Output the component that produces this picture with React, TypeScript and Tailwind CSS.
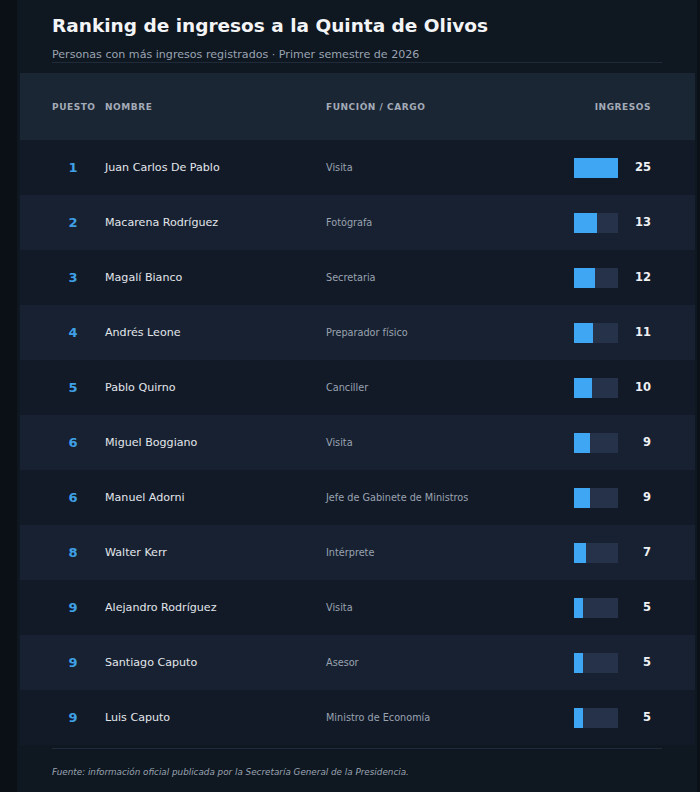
const rows = [
  { rank: 1, name: 'Juan Carlos De Pablo', role: 'Visita', count: 25 },
  { rank: 2, name: 'Macarena Rodríguez', role: 'Fotógrafa', count: 13 },
  { rank: 3, name: 'Magalí Bianco', role: 'Secretaria', count: 12 },
  { rank: 4, name: 'Andrés Leone', role: 'Preparador físico', count: 11 },
  { rank: 5, name: 'Pablo Quirno', role: 'Canciller', count: 10 },
  { rank: 6, name: 'Miguel Boggiano', role: 'Visita', count: 9 },
  { rank: 6, name: 'Manuel Adorni', role: 'Jefe de Gabinete de Ministros', count: 9 },
  { rank: 8, name: 'Walter Kerr', role: 'Intérprete', count: 7 },
  { rank: 9, name: 'Alejandro Rodríguez', role: 'Visita', count: 5 },
  { rank: 9, name: 'Santiago Caputo', role: 'Asesor', count: 5 },
  { rank: 9, name: 'Luis Caputo', role: 'Ministro de Economía', count: 5 },
];

const max = 25;

export default function App() {
  return (
    <div className="min-h-[792px] bg-[#0b1017] pl-[17px] pr-[3px] font-['DejaVu_Sans',sans-serif]">
      <div className="min-h-[792px] bg-[#0f1721]">
        <div className="px-[35px] pt-[12px]">
          <h1 className="text-[18.5px] font-bold leading-[28px] text-[#f3f4f6]">
            Ranking de ingresos a la Quinta de Olivos
          </h1>
          <p className="mt-[8px] border-b border-[#1f2a3a] text-[11.1px] leading-[14px] text-[#9aa3b0]">
            Personas con más ingresos registrados · Primer semestre de 2026
          </p>
        </div>

        <div className="ml-[3px] mr-[2px] mt-[10px]">
          <div className="flex h-[67px] items-center bg-[#1b2634] pl-8 pr-[44px] pt-[3px] text-[9px] font-bold tracking-[0.06em] text-[#a3abb7]">
            <div className="w-[53px]">PUESTO</div>
            <div className="w-[221px]">NOMBRE</div>
            <div className="flex-1">FUNCIÓN / CARGO</div>
            <div>INGRESOS</div>
          </div>
          {rows.map((r, i) => (
            <div
              key={i}
              className={`flex h-[55px] items-center pl-8 pr-[44px] pt-[1px] ${i % 2 === 0 ? 'bg-[#121a28]' : 'bg-[#172131]'}`}
            >
              <div className="w-[53px] pr-[11px] text-center text-[13px] font-bold text-[#3fa0e6]">{r.rank}</div>
              <div className="w-[221px] text-[11.1px] text-[#e2e6eb]">{r.name}</div>
              <div className="flex-1 text-[9.7px] text-[#9aa3b0]">{r.role}</div>
              <div className="flex items-center">
                <div className="h-[20px] w-[44px] bg-[#26324a]">
                  <div className="h-full bg-[#3ea6f2]" style={{ width: `${(r.count / max) * 100}%` }} />
                </div>
                <div className="w-[33px] text-right text-[11.5px] font-bold text-[#eef0f3]">{r.count}</div>
              </div>
            </div>
          ))}
        </div>

        <div className="px-[35px]">
          <div className="mt-[3px] border-t border-[#1f2a3a]" />
          <p className="pt-[17px] text-[8.8px] italic text-[#9aa3b0]">
            Fuente: información oficial publicada por la Secretaría General de la Presidencia.
          </p>
        </div>
      </div>
    </div>
  );
}
